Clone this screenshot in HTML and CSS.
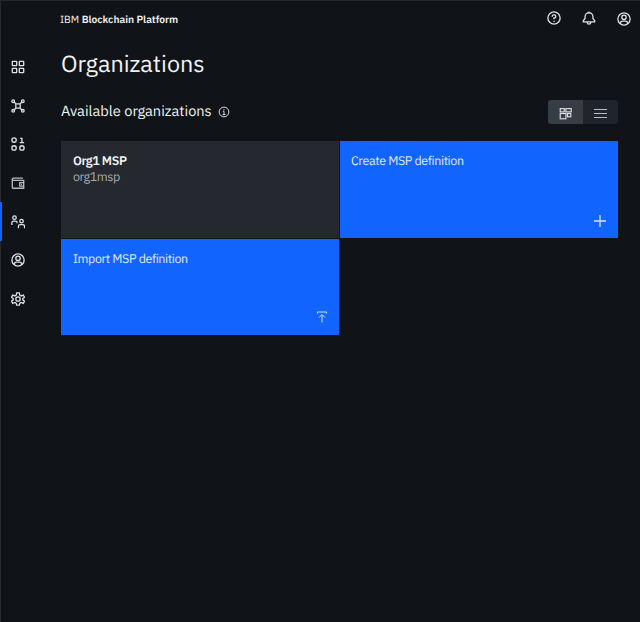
FILE: index.html
```
<!DOCTYPE html>
<html lang="en">
<head>
<meta charset="utf-8">
<title>IBM Blockchain Platform</title>
<link rel="stylesheet" href="styles.css">
</head>
<body>
<div class="app">
  <nav class="sidebar">
    <a class="nav-item"><svg class="icon" viewBox="0 0 32 32"><rect x="3" y="3" width="10" height="10" rx="1"/><rect x="19" y="3" width="10" height="10" rx="1"/><rect x="3" y="19" width="10" height="10" rx="1"/><rect x="19" y="19" width="10" height="10" rx="1"/></svg></a>
    <a class="nav-item"><svg class="icon" viewBox="0 0 32 32"><circle cx="5" cy="5" r="3"/><circle cx="27" cy="5" r="3"/><circle cx="5" cy="27" r="3"/><circle cx="27" cy="27" r="3"/><rect x="11" y="11" width="10" height="10" rx="1"/><path d="M7 7l4 4M25 7l-4 4M7 25l4-4M25 25l-4-4"/></svg></a>
    <a class="nav-item"><svg class="icon" viewBox="0 0 32 32"><circle cx="7" cy="7" r="5"/><circle cx="7" cy="25" r="5"/><circle cx="25" cy="25" r="5"/><path d="M21 3h4v10M20 13h10"/></svg></a>
    <a class="nav-item"><svg class="icon muted" viewBox="0 0 32 32"><path d="M27 5H5q-2 0-2 2v19q0 2 2 2h24V10H4M29 15h-9v8h9M23 19h2"/></svg></a>
    <a class="nav-item active"><svg class="icon" viewBox="0 0 32 32"><circle cx="8" cy="6" r="4"/><circle cx="24" cy="14" r="4"/><path d="M2 23v-5q0-4 4-4h4q4 0 4 4v1M17 30v-4q0-4 4-4h6q4 0 4 4v4"/></svg></a>
    <a class="nav-item"><svg class="icon" viewBox="0 0 32 32"><circle cx="16" cy="16" r="14"/><circle cx="16" cy="12" r="5"/><path d="M8 27v-2q0-4 4-4h8q4 0 4 4v2"/></svg></a>
    <a class="nav-item"><svg class="icon" viewBox="0 0 32 32"><path d="M13 2h6l1 5 3 2 5-2 3 5-4 3v3l4 3-3 5-5-2-3 2-1 4h-6l-1-4-3-2-5 2-3-5 4-3v-3l-4-3 3-5 5 2 3-2z"/><circle cx="16" cy="16" r="5"/></svg></a>
  </nav>
  <div class="content">
    <header class="topbar">
      <div class="brand">IBM <b>Blockchain Platform</b></div>
      <div class="actions">
        <svg class="icon" viewBox="0 0 32 32"><circle cx="16" cy="16" r="14"/><path d="M12 13v-1q0-3 3-3h2q3 0 3 3v1q0 3-4 3v3M16 22v3"/></svg>
        <svg class="icon" viewBox="0 0 32 32"><path d="M16 1v3M3 25v-3l4-5v-4a9 9 0 0 1 18 0v4l4 5v3zM12 26q0 4 4 4t4-4"/></svg>
        <svg class="icon user" viewBox="0 0 32 32"><circle cx="16" cy="16" r="14"/><circle cx="16" cy="12" r="5"/><path d="M8 27v-2q0-4 4-4h8q4 0 4 4v2"/></svg>
      </div>
    </header>
    <main>
      <h1>Organizations</h1>
      <div class="section-head">
        <h2>Available organizations</h2>
        <svg class="info" viewBox="0 0 32 32"><circle cx="16" cy="16" r="13"/><path d="M13 14h3v9M12 23h8M16 8v3"/></svg>
        <div class="toggle">
          <span class="toggle-item selected"><svg class="toggle-icon" viewBox="0 0 32 32"><rect x="3" y="4" width="10" height="8"/><rect x="17" y="4" width="13" height="8"/><rect x="3" y="16" width="14" height="13"/><rect x="21" y="16" width="8" height="8"/></svg></span>
          <span class="toggle-item"><svg class="toggle-icon lines" viewBox="0 0 13 13"><path d="M0 2.500h13M0 6.500h13M0 10.500h13"/></svg></span>
        </div>
      </div>
      <div class="tiles">
        <div class="tile org"><strong>Org1 MSP</strong><span>org1msp</span></div>
        <div class="tile action create"><span>Create MSP definition</span><svg class="plus" viewBox="0 0 12 12"><path d="M6 0v12M0 6h12"/></svg></div>
        <div class="tile action import"><span>Import MSP definition</span><svg class="upload" viewBox="0 0 10 12"><path d="M.5 2.500V1h9v1.500M5 11.500V4M2 6.500L5 3.500l3 3"/></svg></div>
      </div>
    </main>
  </div>
</div>
</body>
</html>
```
FILE: styles.css
```
* { box-sizing: border-box; }
body {
  margin: 0;
  background: #101418;
  color: #f0f2f4;
  font-family: "IBM Plex Sans", "Noto Sans", sans-serif;
  text-rendering: geometricPrecision;
}
.app {
  display: flex;
  height: 622px;
  border-top: 1px solid #24292e;
  border-left: 1px solid #24292e;
}
svg { display: block; fill: none; stroke: #dde1e5; flex: none; }
.sidebar { width: 35px; padding-top: 47px; flex: none; }
.nav-item {
  display: flex;
  align-items: center;
  justify-content: center;
  height: 38.6px;
  padding-right: 1px;
}
.nav-item.active { margin-left: -1px; border-left: 2px solid #1062fe; padding-right: 2px; }
.icon { width: 14px; height: 14px; stroke-width: 3; }
.muted { stroke: #b7bbc0; }
.content { flex: 1; min-width: 0; padding-left: 24px; }
.topbar { display: flex; height: 38px; align-items: center; justify-content: space-between; }
.brand { font-size: 10.3px; line-height: 16px; padding-bottom: 2px; white-space: nowrap; }
.brand b { font-weight: 600; }
.actions { display: flex; gap: 21px; padding: 0 9px 4px 0; }
.user { position: relative; top: 1px; }
main { padding: 6px 22px 0 1px; }
h1 { margin: 0; font-size: 23.4px; line-height: 38px; font-weight: 400; }
.section-head { display: flex; align-items: center; height: 24px; margin-top: 17px; }
h2 { margin: 0 6px 1px 0; font-size: 14.6px; line-height: 22px; font-weight: 400; white-space: nowrap; }
.info { width: 12px; height: 12px; stroke-width: 2.6; }
.toggle { display: flex; margin-left: auto; width: 70px; height: 24px; border-radius: 3px; overflow: hidden; background: #20252b; }
.toggle-item { display: flex; flex: 1; align-items: center; justify-content: center; padding-top: 2px; }
.selected { background: #373d44; }
.toggle-icon { width: 13px; height: 13px; stroke-width: 2.8; }
.lines { stroke-width: 1; stroke: #b9bec3; }
.tiles { display: grid; grid-template-columns: 278px 277.500px; grid-template-rows: 97px 96px; gap: 1px; margin-top: 17px; }
.tile { position: relative; padding: 12px; font-size: 12.5px; letter-spacing: -0.4px; line-height: 16px; white-space: nowrap; }
.org { display: flex; flex-direction: column; background: #25282e; }
.org strong { font-weight: 600; }
.org span { color: #a7abb0; }
.action { background: #1264fe; color: #e0e9ff; }
.create { padding-left: 11px; }
.plus { position: absolute; right: 11.500px; bottom: 11.500px; width: 12px; height: 12px; stroke-width: 1.3; }
.upload { position: absolute; right: 12.500px; bottom: 12px; width: 10px; height: 12px; stroke: #d0e0ff; }
```
